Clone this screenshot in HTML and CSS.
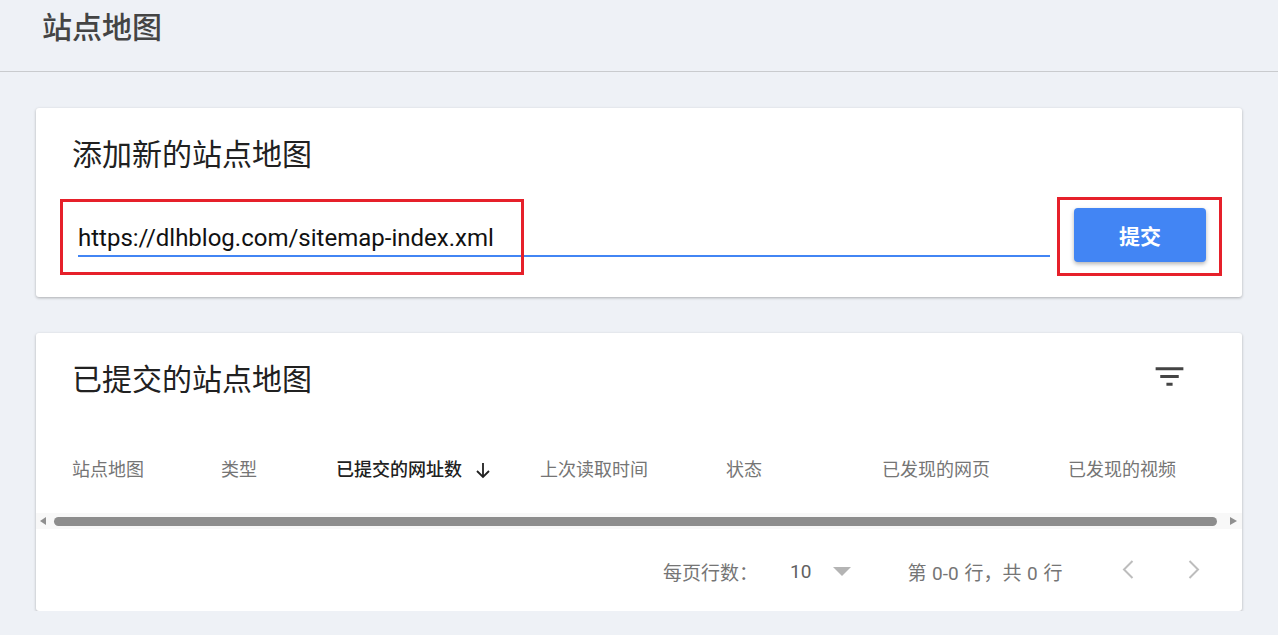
FILE: index.html
```html
<!DOCTYPE html>
<html lang="zh-CN">
<head>
    <meta charset="UTF-8">
    <meta name="viewport" content="width=device-width, initial-scale=1.0">
    <title>站点地图</title>
    <link rel="stylesheet" href="styles.css">
</head>
<body>
    <header class="page-header">
        <h1>站点地图</h1>
    </header>

    <main class="page-body">
        <!-- 添加新的站点地图 -->
        <section class="card add-card">
            <h2 class="card-title">添加新的站点地图</h2>
            <div class="add-row">
                <div class="url-input">https://dlhblog.com/sitemap-index.xml</div>
                <button class="submit-btn">提交</button>
            </div>
            <div class="mark mark-input"></div>
            <div class="mark mark-btn"></div>
        </section>

        <!-- 已提交的站点地图 -->
        <section class="card list-card">
            <div class="list-head">
                <h2 class="card-title">已提交的站点地图</h2>
                <svg class="filter-icon" viewBox="0 0 24 24" width="37" height="37">
                    <path d="M3 6h18v2H3zM6 11h12v2H6zM10 16h4v2h-4z" fill="#444"/>
                </svg>
            </div>

            <div class="table-head">
                <span>站点地图</span>
                <span>类型</span>
                <span class="sorted">已提交的网址数
                    <svg viewBox="0 0 18 18" width="18" height="18">
                        <path d="M9 2v14M3 10l6 6 6-6" fill="none" stroke="#212121" stroke-width="1.8"/>
                    </svg>
                </span>
                <span>上次读取时间</span>
                <span>状态</span>
                <span>已发现的网页</span>
                <span>已发现的视频</span>
            </div>

            <div class="hscroll">
                <i class="arrow-left"></i>
                <div class="thumb"></div>
                <i class="arrow-right"></i>
            </div>

            <div class="pager">
                <span class="rows-label">每页行数：</span>
                <span class="rows-value">10</span>
                <i class="drop"></i>
                <span class="range">第 0-0 行，共 0 行</span>
                <div class="nav">
                    <svg width="12" height="19" viewBox="0 0 12 19"><polyline points="10.5,1 2,9.5 10.5,18" fill="none" stroke="#bdbdbd" stroke-width="2"/></svg>
                    <svg width="12" height="19" viewBox="0 0 12 19"><polyline points="1.5,1 10,9.5 1.5,18" fill="none" stroke="#bdbdbd" stroke-width="2"/></svg>
                </div>
            </div>
        </section>
    </main>
</body>
</html>
```

FILE: styles.css
```css
body {
    margin: 0;
    background: #eef1f6;
    font-family: Roboto, "Noto Sans CJK SC", sans-serif;
    color: #212121;
}

.page-header {
    height: 71px;
    border-bottom: 1px solid #c9cbce;
    box-sizing: content-box;
}

.page-header h1 {
    margin: 0;
    padding: 8px 0 0 42px;
    font-size: 30px;
    line-height: 40px;
    font-weight: 500;
    color: #444;
}

.page-body {
    padding: 36px 36px 0;
}

.card {
    position: relative;
    background: white;
    border-radius: 3px;
    box-shadow: 0 1px 3px rgba(0,0,0,0.28);
}

.card-title {
    margin: 0;
    font-size: 30px;
    line-height: 40px;
    font-weight: 400;
    color: #212121;
}

/* 添加卡片 */
.add-card {
    height: 189px;
    box-sizing: border-box;
    padding: 27px 36px 35px;
}

.add-row {
    display: flex;
    align-items: flex-start;
    margin-top: 33px;
}

.url-input {
    flex: 1;
    margin: 15px 24px 0 6px;
    font-size: 24px;
    line-height: 30px;
    padding-bottom: 2px;
    border-bottom: 2px solid #4285f4;
    color: #111;
}

.submit-btn {
    width: 132px;
    height: 54px;
    border: none;
    border-radius: 4px;
    background: #4285f4;
    color: white;
    font-family: inherit;
    font-size: 21px;
    font-weight: 700;
    box-shadow: 0 2px 4px rgba(0,0,0,0.3);
}

/* 红色标注框 */
.mark {
    position: absolute;
    border: 3px solid #e6202a;
    box-sizing: border-box;
}

.mark-input {
    left: 24px;
    top: 91px;
    width: 464px;
    height: 76px;
}

.mark-btn {
    left: 1021px;
    top: 89px;
    width: 165px;
    height: 79px;
}

/* 列表卡片 */
.list-card {
    margin-top: 36px;
    padding: 27px 0 12px;
}

.list-head {
    display: flex;
    padding: 0 54px 0 36px;
}

.list-head .card-title {
    flex: 1;
}

.filter-icon {
    margin-top: -2px;
}

.table-head {
    display: grid;
    grid-template-columns: 149px 115px 204px 186px 156px 186px 1fr;
    margin-top: 42px;
    padding-left: 36px;
    height: 56px;
    line-height: 56px;
    font-size: 18px;
    color: #757575;
}

.table-head .sorted {
    color: #212121;
    font-weight: 500;
    display: flex;
    align-items: center;
}

.table-head .sorted svg {
    margin-left: 12px;
}

.hscroll {
    display: flex;
    align-items: center;
    height: 16px;
    margin-top: 15px;
    padding: 0 5px 0 4px;
    background: #f8f8f8;
}

.arrow-left {
    width: 0;
    height: 0;
    border-top: 4px solid transparent;
    border-bottom: 4px solid transparent;
    border-right: 6px solid #8f8f8f;
}

.arrow-right {
    width: 0;
    height: 0;
    border-top: 4px solid transparent;
    border-bottom: 4px solid transparent;
    border-left: 7px solid #8f8f8f;
}

.thumb {
    flex: 1;
    height: 9px;
    margin: 0 13px 0 8px;
    border-radius: 5px;
    background: #8d8d8d;
}

.pager {
    display: flex;
    align-items: center;
    height: 56px;
    margin-top: 14px;
    padding: 0 42px 0 627px;
    font-size: 19px;
    color: #757575;
}

.rows-value {
    margin-left: 32px;
    color: #616161;
}

.drop {
    width: 0;
    height: 0;
    margin: 0 0 0 22px;
    border-left: 9px solid transparent;
    border-right: 9px solid transparent;
    border-top: 9px solid #b4b4b4;
}

.range {
    margin-left: 56px;
    word-spacing: 1px;
}

.nav {
    margin-left: auto;
    display: flex;
    gap: 54px;
    margin-top: -4px;
}
```
